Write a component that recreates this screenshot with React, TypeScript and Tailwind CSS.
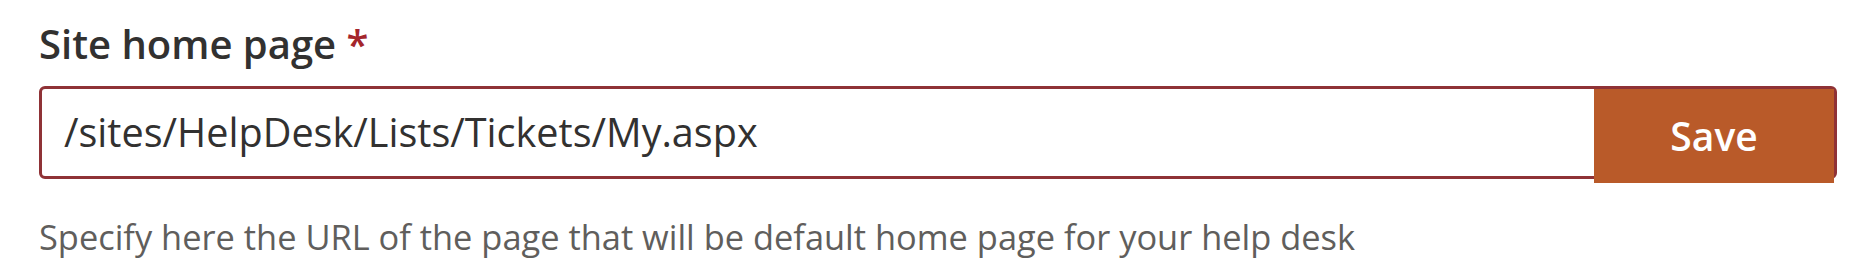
import React, { useState } from 'react';

const App: React.FC = () => {
  const [url] = useState('/sites/HelpDesk/Lists/Tickets/My.aspx');

  return (
    <div className="w-[1874px] h-[280px] bg-white pl-[39px] pr-[37px] pt-[20px] font-['Open_Sans',_'Noto_Sans',_sans-serif]">
      {/* Field label */}
      <label className="block text-[40px] leading-[48px] font-semibold text-[#323130] mb-[18px]">
        Site home page <span className="text-[#a4262c]">*</span>
      </label>

      {/* Input + save */}
      <div className="flex items-start h-[93px] border-[3px] border-[#8f3236] rounded-[6px]">
        <div className="flex-1 self-stretch flex items-center pl-[22px] text-[39.6px] text-[#323130]">
          {url}
        </div>
        <button className="w-[240px] h-[94px] shrink-0 bg-[#b95a29] text-white text-[39px] font-semibold flex items-center justify-center">
          Save
        </button>
      </div>

      <p className="mt-[36px] text-[34.4px] leading-[44px] text-[#605e5c]">
        Specify here the URL of the page that will be default home page for your help desk
      </p>
    </div>
  );
};

export default App;
